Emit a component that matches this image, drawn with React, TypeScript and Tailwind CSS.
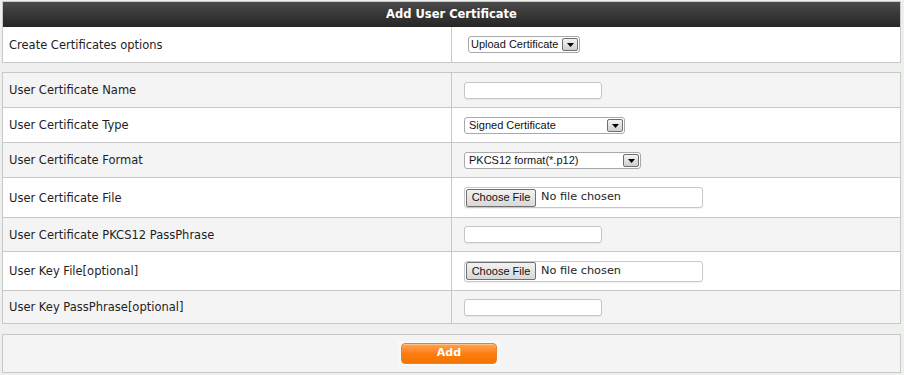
const label = "font-['DejaVu_Sans',Verdana,sans-serif] text-[11.5px] text-[#1e1e1e] pl-[6px] pt-[2px]";

function Select({ text, width, pad }: { text: string; width: string; pad: string }) {
  return (
    <div
      className={`${width} ${pad} h-[17px] flex items-center justify-between bg-white border border-[#a9a9a9] rounded-[3px] pr-[1px] font-['Liberation_Sans',Arial,sans-serif] text-[11px] text-[#111]`}
    >
      <span className="leading-none">{text}</span>
      <span className="w-[16px] h-[13px] flex items-end justify-center pb-[3px] border border-[#6f6f6f] rounded-[2px] bg-gradient-to-b from-[#f3f3f3] to-[#cfcfcf]">
        <svg width="7" height="4" viewBox="0 0 7 4">
          <path d="M0 0 H7 L3.5 4 Z" fill="#000" />
        </svg>
      </span>
    </div>
  );
}

function TextBox() {
  return (
    <div className="w-[138px] h-[17px] bg-white border border-[#c6c6c6] rounded-[3px] shadow-[0_1px_1px_rgba(0,0,0,0.06)]" />
  );
}

function FileBox() {
  return (
    <div className="w-[239px] h-[21px] flex items-center gap-[5px] bg-white border border-[#c8c8c8] rounded-[3px] pl-[1px] shadow-[0_1px_1px_rgba(0,0,0,0.06)]">
      <span className="h-[18px] w-[70px] flex items-center justify-center border border-[#707070] rounded-[2px] bg-gradient-to-b from-[#f2f2f2] to-[#d8d8d8] font-['Liberation_Sans',Arial,sans-serif] text-[11px] text-[#111]">
        Choose File
      </span>
      <span className="font-['DejaVu_Sans',Verdana,sans-serif] text-[11.3px] text-[#1e1e1e]">No file chosen</span>
    </div>
  );
}

const rows: { name: string; h: string; bg: string; field: React.ReactNode }[] = [
  { name: "User Certificate Name", h: "h-[35px]", bg: "bg-[#f4f4f4]", field: <TextBox /> },
  { name: "User Certificate Type", h: "h-[35px]", bg: "bg-white", field: <Select text="Signed Certificate" width="w-[161px]" pad="pl-[4px]" /> },
  { name: "User Certificate Format", h: "h-[35px]", bg: "bg-[#f4f4f4]", field: <Select text="PKCS12 format(*.p12)" width="w-[177px]" pad="pl-[4px]" /> },
  { name: "User Certificate File", h: "h-[40px]", bg: "bg-white", field: <FileBox /> },
  { name: "User Certificate PKCS12 PassPhrase", h: "h-[34px]", bg: "bg-[#f4f4f4]", field: <TextBox /> },
  { name: "User Key File[optional]", h: "h-[39px]", bg: "bg-white", field: <FileBox /> },
  { name: "User Key PassPhrase[optional]", h: "h-[32px]", bg: "bg-[#f4f4f4]", field: <TextBox /> },
];

export default function App() {
  return (
    <div className="w-[904px] h-[375px] bg-[#eef0ee] pt-[1px] pl-[2px] overflow-hidden">
      <div className="w-[899px] border border-[#c8c8c8] bg-white">
        <div className="h-[25px] flex items-center justify-center bg-gradient-to-b from-[#4a4a4a] to-[#262626] font-['DejaVu_Sans',Verdana,sans-serif] font-bold text-[11.5px] text-white">
          Add User Certificate
        </div>
        <div className="h-[35px] flex">
          <div className={`w-[449px] border-r border-[#c8c8c8] flex items-center ${label}`}>Create Certificates options</div>
          <div className="flex items-center pl-[16px]">
            <Select text="Upload Certificate" width="w-[112px]" pad="pl-[2px]" />
          </div>
        </div>
      </div>

      <div className="w-[899px] mt-[9px] border border-[#c8c8c8]">
        {rows.map((r, i) => (
          <div
            key={r.name}
            className={`${r.h} ${r.bg} flex ${i < rows.length - 1 ? "border-b border-[#c8c8c8]" : ""}`}
          >
            <div className={`w-[449px] border-r border-[#c8c8c8] flex items-center ${label}`}>{r.name}</div>
            <div className="flex items-center pl-[12px]">{r.field}</div>
          </div>
        ))}
      </div>

      <div className="w-[899px] h-[39px] mt-[10px] border border-[#c8c8c8] bg-[#f4f4f4] flex items-start justify-center pt-[6px]">
        <div className="flex ml-[-5px] px-[3px] py-[2px] bg-[#f8f8f8]">
          <button className="w-[96px] h-[21px] rounded-[4px] border border-[#e8802e] bg-gradient-to-b from-[#ffa450] via-[#ff7d10] to-[#f27400] font-['DejaVu_Sans',Verdana,sans-serif] font-bold text-[11px] text-white shadow-[inset_0_1px_0_rgba(255,255,255,0.35)]">
            Add
          </button>
        </div>
      </div>
    </div>
  );
}
